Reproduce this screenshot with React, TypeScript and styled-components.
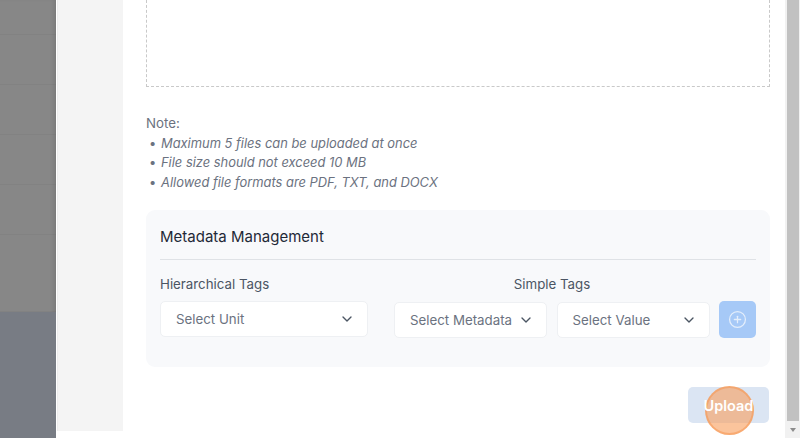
import React from "react";
import styled, { createGlobalStyle } from "styled-components";
import { ChevronDown, CirclePlus } from "lucide-react";

const Global = createGlobalStyle`
  html, body { margin: 0; padding: 0; overflow: hidden; }
  body { font-family: Inter, "Noto Sans", sans-serif; background: #ffffff; }
  * { box-sizing: border-box; }
`;

const Screen = styled.div`
  display: flex;
  width: 800px;
  height: 438px;
  overflow: hidden;
`;

const Backdrop = styled.div`
  width: 56px;
  display: flex;
  flex-direction: column;
  background: #878787;
  box-shadow: inset -4px 0 4px -2px rgba(0, 0, 0, 0.1);
`;

const BackdropRow = styled.div<{ $h: number; $tint?: boolean }>`
  height: ${(p) => p.$h}px;
  flex-shrink: 0;
  border-bottom: 1px solid ${(p) => (p.$tint ? "transparent" : "rgba(0,0,0,0.03)")};
  background: ${(p) => (p.$tint ? "#787c84" : "transparent")};
  ${(p) => (p.$tint ? "flex: 1;" : "")}
`;

const Modal = styled.div`
  flex: 1;
  display: flex;
  background: #ffffff;
  border-left: 1px solid #ffffff;
`;

const Sidebar = styled.div`
  width: 66px;
  height: 431px;
  background: #f4f4f4;
  border-left: 1px solid #ececec;
`;

const Main = styled.div`
  flex: 1;
  display: flex;
  flex-direction: column;
  padding: 0 15px 0 23px;
`;

const DropZone = styled.div`
  height: 87px;
  border: 1px dashed #c9c9c9;
  border-top: none;
`;

const Note = styled.div`
  margin-top: 27px;
  font-size: 13.3px;
  line-height: 19.5px;
  color: #6b7280;
`;

const NoteList = styled.ul`
  margin: 0;
  padding: 0;
  list-style: none;
`;

const NoteItem = styled.li`
  display: flex;
  font-style: italic;
  font-size: 12.9px;
  &::before {
    content: "•";
    font-style: normal;
    width: 12px;
    padding-left: 3px;
    color: #6b7280;
  }
`;

const Card = styled.div`
  margin-top: 18px;
  background: #f8f9fb;
  border-radius: 9px;
  padding: 16px 14px 29px;
`;

const CardTitle = styled.div`
  font-size: 15px;
  line-height: 22px;
  color: #1f2937;
  padding-bottom: 11px;
  border-bottom: 1px solid #dfe2e6;
`;

const TagsGrid = styled.div`
  display: grid;
  grid-template-columns: 208px 1fr;
  column-gap: 26px;
  margin-top: 14px;
`;

const Column = styled.div`
  display: flex;
  flex-direction: column;
  gap: 7px;
`;

const Label = styled.div<{ $center?: boolean }>`
  font-size: 13.3px;
  line-height: 20px;
  color: #4b5563;
  ${(p) => (p.$center ? "width: 316px; text-align: center;" : "")}
`;

const Row = styled.div`
  display: flex;
  gap: 9.5px;
  align-items: center;
`;

const Select = styled.div<{ $w: number }>`
  width: ${(p) => p.$w}px;
  height: 36px;
  background: #ffffff;
  border: 1px solid #eef0f3;
  border-radius: 5px;
  display: flex;
  align-items: center;
  justify-content: space-between;
  padding: 0 12px 0 15px;
  font-size: 13.3px;
  color: #6b7280;
  white-space: nowrap;
  overflow: hidden;
  svg { flex-shrink: 0; color: #4b5563; }
`;

const AddButton = styled.div`
  width: 37px;
  height: 37px;
  border-radius: 5px;
  background: #a6c9f7;
  display: flex;
  align-items: center;
  justify-content: center;
  color: #e4eefb;
`;

const Footer = styled.div`
  display: flex;
  justify-content: flex-end;
  margin-top: 20px;
  padding-right: 1px;
`;

const UploadButton = styled.div`
  position: relative;
  width: 81px;
  height: 36px;
  border-radius: 5px;
  background: #dbe5f3;
  color: #ffffff;
  font-size: 14.5px;
  font-weight: 600;
  display: flex;
  align-items: center;
  justify-content: center;
`;

const ClickMarker = styled.div`
  position: absolute;
  left: 17px;
  top: -1px;
  width: 49px;
  height: 49px;
  border-radius: 50%;
  background: rgba(249, 160, 95, 0.62);
  border: 2px solid rgba(245, 150, 80, 0.55);
`;

const ButtonText = styled.span`
  position: relative;
`;

const Scrollbar = styled.div`
  width: 15px;
  display: flex;
  flex-direction: column;
  background: #f1f1f1;
`;

const Thumb = styled.div`
  flex: 1;
  margin: 0 1px 0 2px;
  background: #c1c1c1;
`;

const Arrow = styled.div`
  height: 17px;
  display: flex;
  align-items: center;
  justify-content: center;
  &::after {
    content: "";
    border-left: 3.5px solid transparent;
    border-right: 3.5px solid transparent;
    border-top: 4px solid #8c8c8c;
  }
`;

export default function App() {
  return (
    <>
      <Global />
      <Screen>
        <Backdrop>
          <BackdropRow $h={35} />
          <BackdropRow $h={50} />
          <BackdropRow $h={50} />
          <BackdropRow $h={50} />
          <BackdropRow $h={50} />
          <BackdropRow $h={77} />
          <BackdropRow $h={126} $tint />
        </Backdrop>
        <Modal>
          <Sidebar />
          <Main>
            <DropZone />
            <Note>
              Note:
              <NoteList>
                <NoteItem>Maximum 5 files can be uploaded at once</NoteItem>
                <NoteItem>File size should not exceed 10 MB</NoteItem>
                <NoteItem>Allowed file formats are PDF, TXT, and DOCX</NoteItem>
              </NoteList>
            </Note>
            <Card>
              <CardTitle>Metadata Management</CardTitle>
              <TagsGrid>
                <Column>
                  <Label>Hierarchical Tags</Label>
                  <Row>
                    <Select $w={208}>
                      Select Unit
                      <ChevronDown size={16} strokeWidth={2} />
                    </Select>
                  </Row>
                </Column>
                <Column>
                  <Label $center>Simple Tags</Label>
                  <Row>
                    <Select $w={153}>
                      Select Metadata
                      <ChevronDown size={16} strokeWidth={2} />
                    </Select>
                    <Select $w={153}>
                      Select Value
                      <ChevronDown size={16} strokeWidth={2} />
                    </Select>
                    <AddButton>
                      <CirclePlus size={19} strokeWidth={1.6} />
                    </AddButton>
                  </Row>
                </Column>
              </TagsGrid>
            </Card>
            <Footer>
              <UploadButton>
                <ClickMarker />
                <ButtonText>Upload</ButtonText>
              </UploadButton>
            </Footer>
          </Main>
          <Scrollbar>
            <Thumb />
            <Arrow />
          </Scrollbar>
        </Modal>
      </Screen>
    </>
  );
}
